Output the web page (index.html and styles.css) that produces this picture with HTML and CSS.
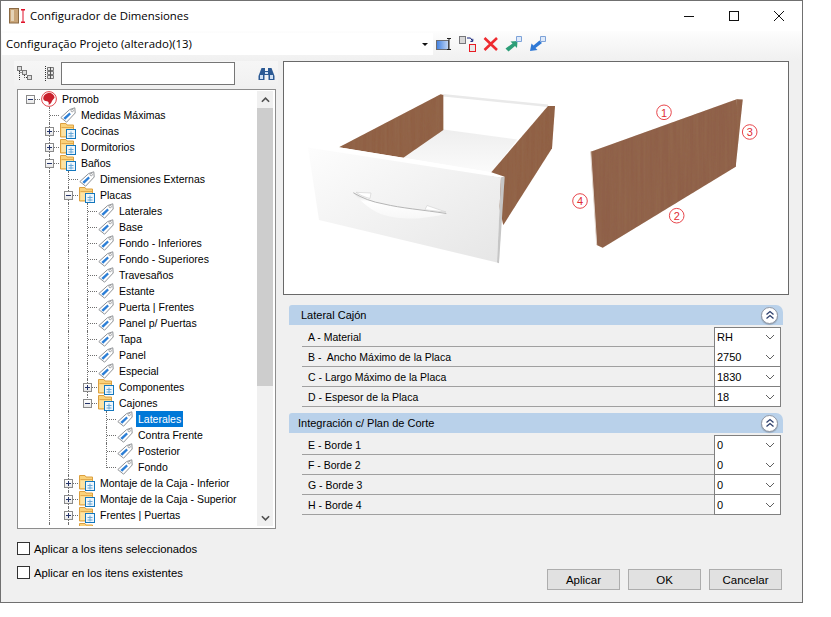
FILE: index.html
```html
<!DOCTYPE html>
<html lang="es">
<head>
<meta charset="utf-8">
<title>Configurador de Dimensiones</title>
<link rel="stylesheet" href="styles.css">
</head>
<body>
<svg class="defs" width="0" height="0" aria-hidden="true">
  <defs>
    <symbol id="tag" viewBox="0 0 16 16">
      <path d="M.8 10.6 9.6 2.6 14.8.8 15.2 6 6.6 15.2Z" fill="#fff" stroke="#8f9296"/>
      <path d="M3.4 10.9 9.4 5.6 10.9 7.2 5.2 12.8Z" fill="#2b7ed6"/>
      <circle cx="12.2" cy="3.6" r="1.2" fill="#fff" stroke="#8f9296" stroke-width=".8"/>
    </symbol>
    <symbol id="folder" viewBox="0 0 16 16">
      <path d="M.5 14V.5H6L7 2H13.5V8H8V14Z" fill="#fad27a" stroke="#dca040"/>
      <path d="M1.5 4.5H13" stroke="#e2a94c" fill="none"/>
      <path d="M1.5 5.5H13V7H7V13H1.5Z" fill="#fde3a4"/>
      <rect x="6.5" y="6.5" width="9" height="9" fill="#eef6fc" stroke="#1377bd"/>
      <path d="M8.5 10.5H13.5M8.5 13H13.5M11 8.5V14.5" stroke="#68a8d8" fill="none"/>
    </symbol>
    <symbol id="promob" viewBox="0 0 16 16">
      <circle cx="8" cy="8" r="7.4" fill="#fff" stroke="#e0474c"/>
      <path d="M2.2 8A5.8 5.8 0 0 1 13.6 6.2C13.4 7.6 11.8 8.2 11 10 10.4 11.6 9.6 13.4 7.6 13.8 8.2 11.6 7.4 10.2 5.8 10.2 4.2 10.2 3 9.8 2.2 8Z" fill="#c9202c"/>
    </symbol>
    <symbol id="chev" viewBox="0 0 10 6">
      <path d="M1 1 5 5 9 1" fill="none" stroke="#606060"/>
    </symbol>
    <symbol id="dbl" viewBox="0 0 10 10">
      <path d="M1.5 4.5 5 1.5 8.5 4.5M1.5 8.5 5 5.5 8.5 8.5" fill="none" stroke="#2d3f6d" stroke-width="1.3"/>
    </symbol>
    <filter id="wood" x="0" y="0" width="100%" height="100%">
      <feTurbulence type="fractalNoise" baseFrequency=".32 .012" numOctaves="2" seed="4" result="n"/>
      <feColorMatrix in="n" type="matrix" values="0 0 0 0 .3  0 0 0 0 .15  0 0 0 0 .08  1 0 0 0 -.3" result="g"/>
      <feComposite in="g" in2="SourceGraphic" operator="in" result="c"/>
      <feMerge><feMergeNode in="SourceGraphic"/><feMergeNode in="c"/></feMerge>
    </filter>
    <linearGradient id="face" x1="0" y1="0" x2="1" y2="1">
      <stop offset="0" stop-color="#fdfdfd"/>
      <stop offset="1" stop-color="#e6e6e6"/>
    </linearGradient>
    <linearGradient id="floor" x1="0" y1="0" x2="0" y2="1">
      <stop offset="0" stop-color="#eeeeee"/>
      <stop offset="1" stop-color="#fbfbfb"/>
    </linearGradient>
    <linearGradient id="scr" x1="0" y1="0" x2="1" y2="0">
      <stop offset="0" stop-color="#3f7fe0"/>
      <stop offset="1" stop-color="#c4d8f6"/>
    </linearGradient>
    <linearGradient id="lens" x1="0" y1="0" x2="0" y2="1">
      <stop offset="0" stop-color="#dcdcdc"/>
      <stop offset=".35" stop-color="#fff"/>
      <stop offset="1" stop-color="#f7f7f7"/>
    </linearGradient>
  </defs>
</svg>

<div class="window">
  <header class="titlebar">
    <svg class="appicon" width="17" height="16" viewBox="0 0 17 16">
      <rect x=".5" y=".5" width="9" height="14.5" fill="#c9a578" stroke="#8b6a44"/>
      <rect x="2" y="2" width="3" height="11" fill="#e4d2b6"/>
      <path d="M14 1V15M12 1.5H16M12 14.5H16M12.5 3 14 1.5 15.5 3M12.5 13 14 14.5 15.5 13" stroke="#e0122a" fill="none"/>
    </svg>
    <span class="title">Configurador de Dimensiones</span>
    <div class="winbtns">
      <svg width="12" height="12" viewBox="0 0 12 12"><path d="M1 6.5H11" stroke="#111"/></svg>
      <svg width="12" height="12" viewBox="0 0 12 12"><rect x="1.5" y="1.5" width="9" height="9" fill="none" stroke="#111"/></svg>
      <svg width="12" height="12" viewBox="0 0 12 12"><path d="M1 1 11 11M11 1 1 11" stroke="#111"/></svg>
    </div>
  </header>

  <div class="toolbar">
    <div class="combo">
      <span class="combotext">Configuração Projeto (alterado)(13)</span>
      <span class="comboarrow"></span>
    </div>
    <div class="tools">
      <svg width="17" height="16" viewBox="0 0 17 16"><rect x=".5" y="4.5" width="12" height="9" fill="url(#scr)" stroke="#6d6d72"/><path d="M11 2.5H15M13 2.5V13.5M11 13.5H15" stroke="#222" fill="none"/></svg>
      <svg width="18" height="16" viewBox="0 0 18 16"><rect x=".5" y=".5" width="6" height="7" fill="#d8d8d8" stroke="#77777b"/><rect x="10.5" y="8.5" width="6" height="7" fill="#e8e8e8" stroke="#e81c24"/><path d="M8 2H11.5L13.5 5M13.8 2.8V5.4H11.4" stroke="#12207a" fill="none"/></svg>
      <svg width="16" height="16" viewBox="0 0 16 16"><path d="M1.5 2 14 14M14 2 1.5 14" stroke="#ee2b30" stroke-width="2.6"/></svg>
      <svg width="18" height="16" viewBox="0 0 18 16"><path d="M.5 12.5 7.5 7.5 5.5 5.5 12.5 5 12 12 10 10 3.5 15.5Z" fill="#2d9e78"/><path d="M11.5.5H16.5V5.5H11.5Z" fill="#dfeafa" stroke="#7da2d8"/></svg>
      <svg width="18" height="16" viewBox="0 0 18 16"><path d="M10.5 4.5 4.5 9.5 2.5 7.5 1 15 8.5 14 6.5 12 13 7Z" fill="#2f79d6"/><path d="M11.5.5H16.5V5.5H11.5Z" fill="#dfeafa" stroke="#7da2d8"/></svg>
    </div>
  </div>

  <main class="content">
    <section class="leftcol">
      <div class="searchstrip">
        <svg class="treeicon" width="16" height="15" viewBox="0 0 16 15">
          <rect x=".5" y=".5" width="4" height="4" fill="#ddd" stroke="#777"/>
          <rect x="5.5" y="4.5" width="4" height="4" fill="#ddd" stroke="#777"/>
          <rect x="10.5" y="9.5" width="4" height="4" fill="#ddd" stroke="#777"/>
          <path d="M2.5 5V14M2.5 6.5H5M7.5 9V11.5H10" stroke="#333" stroke-dasharray="1 1" fill="none"/>
        </svg>
        <svg class="listicon" width="10" height="15" viewBox="0 0 10 15">
          <path d="M1.5 0V15" stroke="#333" stroke-dasharray="1 1"/>
          <path d="M3.5 1.5H9.5V4.5H3.5ZM3.5 5.5H9.5V8.5H3.5ZM3.5 9.5H9.5V12.5H3.5Z" fill="#e4e4e4" stroke="#777"/>
          <path d="M6.5 1V13" stroke="#555"/>
        </svg>
        <input class="search" type="text" aria-label="Buscar">
        <svg class="binoc" width="17" height="14" viewBox="0 0 17 14">
          <path d="M3.5 1H7V4H10V1H13.5L16.5 9V13H10.5V8H6.5V13H.5V9Z" fill="#2c5a94"/>
          <rect x="2" y="8" width="3" height="4" fill="#cfe0f4"/>
          <rect x="12" y="8" width="3" height="4" fill="#cfe0f4"/>
          <rect x="7" y="5" width="3" height="2" fill="#cfe0f4"/>
        </svg>
      </div>

      <div class="tree">
        <div class="treelist">
          <div class="row"><i class="g root"><b class="exp"></b></i><svg class="ic"><use href="#promob"/></svg><span class="lbl">Promob</span></div>
          <div class="row"><i class="g"></i><i class="g t"></i><svg class="ic"><use href="#tag"/></svg><span class="lbl">Medidas Máximas</span></div>
          <div class="row"><i class="g"></i><i class="g t"><b class="exp plus"></b></i><svg class="ic"><use href="#folder"/></svg><span class="lbl">Cocinas</span></div>
          <div class="row"><i class="g"></i><i class="g t"><b class="exp plus"></b></i><svg class="ic"><use href="#folder"/></svg><span class="lbl">Dormitorios</span></div>
          <div class="row"><i class="g"></i><i class="g t"><b class="exp"></b></i><svg class="ic"><use href="#folder"/></svg><span class="lbl">Baños</span></div>
          <div class="row"><i class="g"></i><i class="g v"></i><i class="g t"></i><svg class="ic"><use href="#tag"/></svg><span class="lbl">Dimensiones Externas</span></div>
          <div class="row"><i class="g"></i><i class="g v"></i><i class="g t"><b class="exp"></b></i><svg class="ic"><use href="#folder"/></svg><span class="lbl">Placas</span></div>
          <div class="row"><i class="g"></i><i class="g v"></i><i class="g v"></i><i class="g t"></i><svg class="ic"><use href="#tag"/></svg><span class="lbl">Laterales</span></div>
          <div class="row"><i class="g"></i><i class="g v"></i><i class="g v"></i><i class="g t"></i><svg class="ic"><use href="#tag"/></svg><span class="lbl">Base</span></div>
          <div class="row"><i class="g"></i><i class="g v"></i><i class="g v"></i><i class="g t"></i><svg class="ic"><use href="#tag"/></svg><span class="lbl">Fondo - Inferiores</span></div>
          <div class="row"><i class="g"></i><i class="g v"></i><i class="g v"></i><i class="g t"></i><svg class="ic"><use href="#tag"/></svg><span class="lbl">Fondo - Superiores</span></div>
          <div class="row"><i class="g"></i><i class="g v"></i><i class="g v"></i><i class="g t"></i><svg class="ic"><use href="#tag"/></svg><span class="lbl">Travesaños</span></div>
          <div class="row"><i class="g"></i><i class="g v"></i><i class="g v"></i><i class="g t"></i><svg class="ic"><use href="#tag"/></svg><span class="lbl">Estante</span></div>
          <div class="row"><i class="g"></i><i class="g v"></i><i class="g v"></i><i class="g t"></i><svg class="ic"><use href="#tag"/></svg><span class="lbl">Puerta | Frentes</span></div>
          <div class="row"><i class="g"></i><i class="g v"></i><i class="g v"></i><i class="g t"></i><svg class="ic"><use href="#tag"/></svg><span class="lbl">Panel p/ Puertas</span></div>
          <div class="row"><i class="g"></i><i class="g v"></i><i class="g v"></i><i class="g t"></i><svg class="ic"><use href="#tag"/></svg><span class="lbl">Tapa</span></div>
          <div class="row"><i class="g"></i><i class="g v"></i><i class="g v"></i><i class="g t"></i><svg class="ic"><use href="#tag"/></svg><span class="lbl">Panel</span></div>
          <div class="row"><i class="g"></i><i class="g v"></i><i class="g v"></i><i class="g t"></i><svg class="ic"><use href="#tag"/></svg><span class="lbl">Especial</span></div>
          <div class="row"><i class="g"></i><i class="g v"></i><i class="g v"></i><i class="g t"><b class="exp plus"></b></i><svg class="ic"><use href="#folder"/></svg><span class="lbl">Componentes</span></div>
          <div class="row"><i class="g"></i><i class="g v"></i><i class="g v"></i><i class="g l"><b class="exp"></b></i><svg class="ic"><use href="#folder"/></svg><span class="lbl">Cajones</span></div>
          <div class="row"><i class="g"></i><i class="g v"></i><i class="g v"></i><i class="g"></i><i class="g t"></i><svg class="ic"><use href="#tag"/></svg><span class="lbl selected">Laterales</span></div>
          <div class="row"><i class="g"></i><i class="g v"></i><i class="g v"></i><i class="g"></i><i class="g t"></i><svg class="ic"><use href="#tag"/></svg><span class="lbl">Contra Frente</span></div>
          <div class="row"><i class="g"></i><i class="g v"></i><i class="g v"></i><i class="g"></i><i class="g t"></i><svg class="ic"><use href="#tag"/></svg><span class="lbl">Posterior</span></div>
          <div class="row"><i class="g"></i><i class="g v"></i><i class="g v"></i><i class="g"></i><i class="g l"></i><svg class="ic"><use href="#tag"/></svg><span class="lbl">Fondo</span></div>
          <div class="row"><i class="g"></i><i class="g v"></i><i class="g t"><b class="exp plus"></b></i><svg class="ic"><use href="#folder"/></svg><span class="lbl">Montaje de la Caja - Inferior</span></div>
          <div class="row"><i class="g"></i><i class="g v"></i><i class="g t"><b class="exp plus"></b></i><svg class="ic"><use href="#folder"/></svg><span class="lbl">Montaje de la Caja - Superior</span></div>
          <div class="row"><i class="g"></i><i class="g v"></i><i class="g t"><b class="exp plus"></b></i><svg class="ic"><use href="#folder"/></svg><span class="lbl">Frentes | Puertas</span></div>
          <div class="row"><i class="g"></i><i class="g v"></i><i class="g t"></i><svg class="ic"><use href="#folder"/></svg><span class="lbl">Superficies</span></div>
        </div>
        <div class="scrollbar">
          <div class="sbtn"><svg width="9" height="6" viewBox="0 0 10 6"><path d="M1 5 5 1 9 5" fill="none" stroke="#505050" stroke-width="1.8"/></svg></div>
          <div class="strack"><div class="sthumb"></div></div>
          <div class="sbtn"><svg width="9" height="6" viewBox="0 0 10 6"><path d="M1 1 5 5 9 1" fill="none" stroke="#505050" stroke-width="1.8"/></svg></div>
        </div>
      </div>

      <div class="checks">
        <label class="check"><input type="checkbox"><span>Aplicar a los itens seleccionados</span></label>
        <label class="check"><input type="checkbox"><span>Aplicar en los itens existentes</span></label>
      </div>
    </section>

    <section class="rightcol">
      <div class="preview">
        <svg class="drawing" width="505" height="232" viewBox="284 62 505 232">
          <path d="M443 94 548 104.5 548 107 443 96.5Z" fill="#e9e9e9"/>
          <path d="M443.3 129.5 517.3 139.5 491.3 172.3 403.3 157.7Z" fill="url(#floor)"/>
          <path d="M339 147.3 440.7 94.3 443.3 95 443.3 130 403.3 157.7Z" fill="#906045" filter="url(#wood)"/>
          <path d="M491.3 172.3 548 106 555 106 552 148.3 503.3 225Z" fill="#906045" filter="url(#wood)"/>
          <path d="M308 146 339 147.3 403.3 157.7 491.3 172.3 504.7 176.7 501 178 308 148Z" fill="#fff"/>
          <path d="M308 147.5 501 177.5 497 262.5 319 220Z" fill="url(#face)"/>
          <path d="M501 177.5 504.7 176.7 499 263.3 497 262.5Z" fill="#c6c6c6"/>
          <path d="M353.3 192.7C362 198 372 202 384 204 400 208 424 210 446.3 213.5 444 214.5 437 216 430.7 216.7 420 218.5 412 218.8 404 218.3 394 217.5 388 216.5 380.7 214 372 210 364 205 353.3 192.7Z" fill="url(#lens)"/>
          <path d="M353.3 192.7C362 198 372 202 384 204 400 208 424 210 446.3 213.5" fill="none" stroke="#b5b5b5" stroke-width="1"/>
          <path d="M356 192.3 371 193 370 198.5C364 197 360 195 356 192.3ZM427 205.5 446 212 425 209.8Z" fill="#fff" stroke="#cfcfcf" stroke-width=".6"/>
          <path d="M736.7 99.3 742.7 99.5 735.7 166.7 730 168Z" fill="#8f6148" filter="url(#wood)"/>
          <path d="M590.7 151.7 736.7 99.3 735.7 166.7 602.7 247.7 596.7 245Z" fill="#8f6148" filter="url(#wood)"/>
          <path d="M590.7 151.7 596.7 245" stroke="#e3d8d0" fill="none"/>
          <g class="marks">
            <circle cx="664" cy="112.3" r="7.3"/><text x="664" y="116.5">1</text>
            <circle cx="749.7" cy="132" r="7.3"/><text x="749.7" y="136.2">3</text>
            <circle cx="676.7" cy="215.7" r="7.3"/><text x="676.7" y="219.9">2</text>
            <circle cx="580" cy="201" r="7.3"/><text x="580" y="205.2">4</text>
          </g>
        </svg>
      </div>

      <div class="group first">
        <div class="grouphead"><span class="gname">Lateral Cajón</span><span class="collapse"><svg width="10" height="10"><use href="#dbl"/></svg></span></div>
        <div class="prop"><span class="pname">A - Material</span><span class="pval"><span>RH</span><svg width="10" height="6"><use href="#chev"/></svg></span></div>
        <div class="prop"><span class="pname">B -&nbsp; Ancho Máximo de la Placa</span><span class="pval"><span>2750</span><svg width="10" height="6"><use href="#chev"/></svg></span></div>
        <div class="prop"><span class="pname">C - Largo Máximo de la Placa</span><span class="pval"><span>1830</span><svg width="10" height="6"><use href="#chev"/></svg></span></div>
        <div class="prop"><span class="pname">D - Espesor de la Placa</span><span class="pval"><span>18</span><svg width="10" height="6"><use href="#chev"/></svg></span></div>
      </div>

      <div class="group">
        <div class="grouphead"><span class="gname second">Integración c/ Plan de Corte</span><span class="collapse"><svg width="10" height="10"><use href="#dbl"/></svg></span></div>
        <div class="prop"><span class="pname">E - Borde 1</span><span class="pval"><span>0</span><svg width="10" height="6"><use href="#chev"/></svg></span></div>
        <div class="prop"><span class="pname">F - Borde 2</span><span class="pval"><span>0</span><svg width="10" height="6"><use href="#chev"/></svg></span></div>
        <div class="prop"><span class="pname">G - Borde 3</span><span class="pval"><span>0</span><svg width="10" height="6"><use href="#chev"/></svg></span></div>
        <div class="prop"><span class="pname">H - Borde 4</span><span class="pval"><span>0</span><svg width="10" height="6"><use href="#chev"/></svg></span></div>
      </div>

      <div class="actions">
        <button class="btn" type="button">Aplicar</button>
        <button class="btn" type="button">OK</button>
        <button class="btn" type="button">Cancelar</button>
      </div>
    </section>
  </main>
</div>
</body>
</html>
```

FILE: styles.css
```css
* { box-sizing: border-box; }
html, body { margin: 0; padding: 0; background: #fff; }
body { font: 11px/16px "Liberation Sans", Arial, sans-serif; color: #000; width: 831px; height: 617px; overflow: hidden; }
.defs { display: block; height: 0; }

.window { width: 803px; height: 603px; border: 1px solid #707070; background: #f0f0f0; display: flex; flex-direction: column; }

.titlebar { height: 30px; background: #fff; display: flex; align-items: center; padding-left: 8px; flex: none; }
.appicon { flex: none; }
.title { margin-left: 4px; font: 11.4px/16px "Open Sans", sans-serif; color: #000; }
.winbtns { margin-left: auto; display: flex; gap: 33px; padding-right: 17px; }

.toolbar { height: 30px; flex: none; display: flex; align-items: flex-start; background: linear-gradient(#fdfdfd, #f0f0f0); padding-top: 2px; }
.combo { width: 431px; height: 22px; margin-left: 1px; background: #fff; display: flex; align-items: center; padding: 0 4px; justify-content: space-between; }
.combotext { font: 11.4px/16px "Open Sans", sans-serif; color: #000; }
.comboarrow { width: 0; height: 0; border: 3px solid transparent; border-top: 3px solid #111; border-bottom: 0; margin-right: 1px; }
.tools { display: flex; gap: 6px; align-items: center; margin-left: 3px; padding-top: 3px; }

.content { flex: 1; display: flex; min-height: 0; padding-left: 13px; }
.leftcol { width: 264px; flex: none; display: flex; flex-direction: column; }
.rightcol { width: 506px; margin-left: 5px; flex: none; display: flex; flex-direction: column; }

.searchstrip { height: 25px; display: flex; align-items: center; background: linear-gradient(#f6f6f6, #f1f1f1); padding-left: 3px; }
.treeicon { flex: none; }
.listicon { flex: none; margin-left: 11px; }
.search { width: 174px; height: 23px; margin-left: 7px; border: 1px solid #767676; background: #fff; padding: 0; flex: none; }
.binoc { margin-left: 23px; flex: none; }

.tree { margin: 3px 0 0 3px; width: 259px; height: 440px; border: 1px solid #8d8d8d; background: #fff; display: flex; padding: 1px 2px 2px 0; flex: none; }
.treelist { flex: 1; min-width: 0; overflow: hidden; padding-left: 3px; }
.row { height: 16px; display: flex; align-items: center; white-space: nowrap; }
.g { width: 19px; height: 16px; flex: none; position: relative; display: block; }
.g.v::before, .g.t::before { content: ""; position: absolute; left: 9px; top: 0; bottom: 0; border-left: 1px dotted #6f6f6f; }
.g.l::before { content: ""; position: absolute; left: 9px; top: 0; height: 9px; border-left: 1px dotted #6f6f6f; }
.g.t::after, .g.l::after, .g.root::after { content: ""; position: absolute; left: 10px; width: 9px; top: 8px; border-top: 1px dotted #6f6f6f; }
.exp { position: absolute; left: 5px; top: 4px; width: 9px; height: 9px; border: 1px solid #8a8a8a; background: linear-gradient(#fff, #e8e8e8); z-index: 1; }
.exp::before { content: ""; position: absolute; left: 1px; top: 3px; width: 5px; height: 1px; background: #24346a; }
.exp.plus::after { content: ""; position: absolute; left: 3px; top: 1px; width: 1px; height: 5px; background: #24346a; }
.ic { width: 16px; height: 16px; flex: none; margin-left: 1px; }
.lbl { margin-left: 3px; padding: 0 2px; height: 16px; line-height: 16px; font-size: 10.5px; color: #000; }
.lbl.selected { background: #0078d7; color: #fff; }

.scrollbar { width: 16px; flex: none; background: #f0f0f0; display: flex; flex-direction: column; }
.sbtn { height: 17px; flex: none; display: flex; align-items: center; justify-content: center; }
.strack { flex: 1; }
.sthumb { height: 278px; background: #cdcdcd; }

.checks { margin: 13px 0 0 3px; display: flex; flex-direction: column; gap: 11px; font-size: 11.3px; }
.check { display: flex; align-items: center; height: 13px; gap: 4px; }
.check input { appearance: none; margin: 0; width: 13px; height: 13px; border: 1px solid #333; background: #fff; border-radius: 0; flex: none; }

.preview { height: 234px; border: 1px solid #696969; background: #fff; flex: none; }
.drawing { display: block; }
.marks circle { fill: #fff; stroke: #e8474c; stroke-width: 1; }
.marks text { fill: #e02d33; font: 11px "Liberation Sans", Arial, sans-serif; text-anchor: middle; }

.group { margin: 10px 0 0 6px; width: 494px; }
.group + .group { margin-top: 6px; }
.grouphead { height: 20px; background: #b9d1ea; border-radius: 3px 7px 0 0; display: flex; align-items: center; justify-content: space-between; padding-right: 5px; margin-bottom: 2px; }
.gname { padding-left: 12px; font-size: 11px; }
.gname.second { padding-left: 9px; }
.collapse { width: 17px; height: 17px; border-radius: 50%; background: #fff; border: 1px solid #8f96a3; box-shadow: 0 1px 1px rgba(0,0,0,.2); display: flex; align-items: center; justify-content: center; }
.prop { height: 20px; width: 479px; margin-left: 13px; border-bottom: 1px solid #a0a0a0; display: flex; align-items: center; justify-content: space-between; }
.pname { padding-left: 6px; font-size: 10.5px; }
.first .pname { padding-top: 1px; }
.pval { width: 67px; height: 21px; border: 1px solid #808080; background: #fff; display: flex; align-items: center; justify-content: space-between; padding: 0 3px 1px 2px; font-size: 11px; flex: none; align-self: flex-start; }
.prop + .prop .pval { border-top: 0; height: 20px; padding-bottom: 0; }
.pval svg { margin-right: 2px; }

.actions { margin-top: auto; margin-bottom: 12px; display: flex; justify-content: flex-end; gap: 8px; padding-right: 7px; }
.btn { width: 73px; height: 21px; background: #e1e1e1; border: 1px solid #adadad; font: 11.5px/16px "Liberation Sans", Arial, sans-serif; color: #000; padding: 0; }
```
